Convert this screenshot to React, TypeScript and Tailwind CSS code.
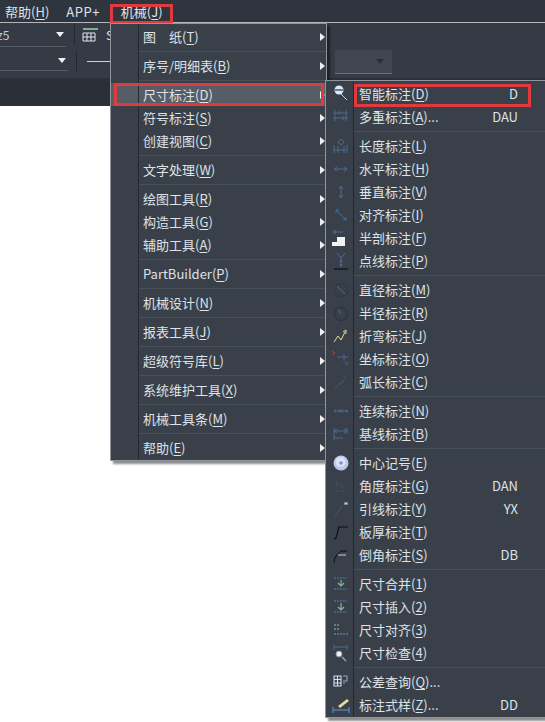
const font = { fontFamily: '"Noto Sans CJK SC", sans-serif' };

type Item = { zh: string; key?: string; tail?: string; short?: string; icon?: string; sep?: boolean };

const mainItems: Item[] = [
  { zh: "图　纸", key: "T", sep: true },
  { zh: "序号/明细表", key: "B", sep: true },
  { zh: "尺寸标注", key: "D" },
  { zh: "符号标注", key: "S" },
  { zh: "创建视图", key: "C", sep: true },
  { zh: "文字处理", key: "W", sep: true },
  { zh: "绘图工具", key: "R" },
  { zh: "构造工具", key: "G" },
  { zh: "辅助工具", key: "A", sep: true },
  { zh: "PartBuilder", key: "P", sep: true },
  { zh: "机械设计", key: "N", sep: true },
  { zh: "报表工具", key: "J", sep: true },
  { zh: "超级符号库", key: "L", sep: true },
  { zh: "系统维护工具", key: "X", sep: true },
  { zh: "机械工具条", key: "M", sep: true },
  { zh: "帮助", key: "E" },
];

const subItems: Item[] = [
  { zh: "智能标注", key: "D", short: "D", icon: "smart" },
  { zh: "多重标注", key: "A", tail: "...", short: "DAU", icon: "multi", sep: true },
  { zh: "长度标注", key: "L", icon: "length" },
  { zh: "水平标注", key: "H", icon: "horiz" },
  { zh: "垂直标注", key: "V", icon: "vert" },
  { zh: "对齐标注", key: "I", icon: "align" },
  { zh: "半剖标注", key: "F", icon: "half" },
  { zh: "点线标注", key: "P", icon: "dot", sep: true },
  { zh: "直径标注", key: "M", icon: "diameter" },
  { zh: "半径标注", key: "R", icon: "radius" },
  { zh: "折弯标注", key: "J", icon: "jog" },
  { zh: "坐标标注", key: "O", icon: "ordinate" },
  { zh: "弧长标注", key: "C", icon: "arc", sep: true },
  { zh: "连续标注", key: "N", icon: "cont" },
  { zh: "基线标注", key: "B", icon: "base", sep: true },
  { zh: "中心记号", key: "E", icon: "center" },
  { zh: "角度标注", key: "G", short: "DAN", icon: "angle" },
  { zh: "引线标注", key: "Y", short: "YX", icon: "leader" },
  { zh: "板厚标注", key: "T", icon: "plate" },
  { zh: "倒角标注", key: "S", short: "DB", icon: "chamfer", sep: true },
  { zh: "尺寸合并", key: "1", icon: "merge" },
  { zh: "尺寸插入", key: "2", icon: "insert" },
  { zh: "尺寸对齐", key: "3", icon: "dimalign" },
  { zh: "尺寸检查", key: "4", icon: "check", sep: true },
  { zh: "公差查询", key: "Q", tail: "...", icon: "tol" },
  { zh: "标注式样", key: "Z", tail: "...", short: "DD", icon: "style" },
];

function Glyph({ name }: { name?: string }) {
  const blue = "#4a6b94";
  const dim = "#46525f";
  let g = null;
  switch (name) {
    case "smart":
      g = (
        <>
          <circle cx="8" cy="6" r="4.5" fill="#dfe6ee" />
          <path d="M4 6h8" stroke="#2c5f8f" strokeWidth="1.5" />
          <path d="M10 10l6 6" stroke="#cfd6dd" strokeWidth="1" />
        </>
      );
      break;
    case "multi":
      g = <path d="M4 3v11M15 3v11M2 6h15M2 11h15M8 4v4M12 9v4" stroke={blue} strokeWidth="1" fill="none" />;
      break;
    case "length":
      g = <path d="M3 17V9M16 17V9M3 14h13M10 3l3 3-3 3-3-3zM7 10v7M13 10v7" stroke={blue} strokeWidth="1" fill="none" />;
      break;
    case "horiz":
      g = <path d="M3 10h13M3 10l3-2M3 10l3 2M16 10l-3-2M16 10l-3 2" stroke={blue} strokeWidth="1" fill="none" />;
      break;
    case "vert":
      g = <path d="M10 4v12M10 4l-2 3M10 4l2 3M10 16l-2-3M10 16l2-3" stroke={blue} strokeWidth="1" fill="none" />;
      break;
    case "align":
      g = <path d="M5 5l10 10M5 5h3M5 5v3M15 15h-3M15 15v-3" stroke={blue} strokeWidth="1" fill="none" />;
      break;
    case "half":
      g = (
        <>
          <path d="M2 4h10M2 4l3-2M2 4l3 2" stroke={blue} strokeWidth="1" fill="none" />
          <path d="M1 18v-4h5v-5h8v9z" fill="#f2f2f2" />
        </>
      );
      break;
    case "dot":
      g = (
        <>
          <path d="M6 2l4 5 4-5M10 7v9" stroke={blue} strokeWidth="1" fill="none" />
          <circle cx="10" cy="10" r="1.2" fill={blue} />
          <circle cx="10" cy="14" r="1.2" fill={blue} />
          <path d="M3 18h14" stroke="#10141a" strokeWidth="1.3" />
        </>
      );
      break;
    case "diameter":
      g = (
        <>
          <circle cx="10" cy="10" r="6.5" stroke="#2f3a47" strokeWidth="1.3" fill="none" />
          <path d="M6 6l8 8" stroke={blue} strokeWidth="1" />
        </>
      );
      break;
    case "radius":
      g = (
        <>
          <circle cx="10" cy="11" r="6.5" stroke="#2a3440" strokeWidth="1.3" fill="none" />
          <path d="M10 11l-3-5" stroke={blue} strokeWidth="1" />
        </>
      );
      break;
    case "jog":
      g = <path d="M3 16l4-6 3 4 4-8M12 6l3-2v4" stroke="#e8dc8a" strokeWidth="1" fill="none" />;
      break;
    case "ordinate":
      g = (
        <>
          <path d="M1 2l3 2-3 2" stroke="#a8444a" strokeWidth="1" fill="none" />
          <path d="M6 8h11M13 5v7" stroke={blue} strokeWidth="1" fill="none" />
          <path d="M14 13l3 3M17 13l-3 3" stroke="#8f4a4a" strokeWidth="1" />
        </>
      );
      break;
    case "arc":
      g = <path d="M4 17l4-5M8 12q4-1 5-4M13 7l3-4" stroke={dim} strokeWidth="1.2" fill="none" />;
      break;
    case "cont":
      g = <path d="M3 10h14M5 8.5L3 10l2 1.5M8 8.5l2 1.5-2 1.5M12 8.5L10 10l2 1.5M15 8.5l2 1.5-2 1.5" stroke={blue} strokeWidth="1" fill="none" />;
      break;
    case "base":
      g = <path d="M3 4v12M16 4v6M3 7h13M3 14h9M3 7l3-2M3 7l3 2M16 7l-3-2M16 7l-3 2" stroke={blue} strokeWidth="1" fill="none" />;
      break;
    case "center":
      g = (
        <>
          <circle cx="10" cy="10" r="7.5" fill="#b9c8ee" />
          <circle cx="9.5" cy="9" r="5" fill="#dbe3f7" />
          <path d="M8 10h4M10 8v4" stroke="#6a7cb0" strokeWidth="1" />
        </>
      );
      break;
    case "angle":
      g = <path d="M6 5v10h8M6 7q5 1 6 6" stroke={dim} strokeWidth="1.1" fill="none" strokeDasharray="2 1" />;
      break;
    case "leader":
      g = (
        <>
          <path d="M4 17l8-11" stroke={dim} strokeWidth="1.1" />
          <path d="M14 3v3M16 3v3M14 4.5h2" stroke="#d9dde2" strokeWidth="0.9" />
        </>
      );
      break;
    case "plate":
      g = <path d="M3 17l2-1 3-11h9" stroke="#0c0f13" strokeWidth="1.1" fill="none" />;
      break;
    case "chamfer":
      g = (
        <>
          <path d="M3 18q0-6 3-8l4-4h6" stroke="#0c0f13" strokeWidth="1" fill="none" />
          <path d="M7 10h8" stroke="#c9cdd2" strokeWidth="1" />
        </>
      );
      break;
    case "merge":
      g = (
        <>
          <path d="M3 4h13M3 15h13" stroke={blue} strokeWidth="1.5" strokeDasharray="2 1" />
          <path d="M10 6v6M7 9l3 3 3-3" stroke="#7fb89a" strokeWidth="1.2" fill="none" />
        </>
      );
      break;
    case "insert":
      g = (
        <>
          <path d="M3 4h13M3 15h13" stroke={blue} strokeWidth="1.5" strokeDasharray="2 1" fill="none" />
          <path d="M10 6v7M7 10l3 3 3-3" stroke="#7fb89a" strokeWidth="1.2" fill="none" />
        </>
      );
      break;
    case "dimalign":
      g = (
        <>
          <path d="M3 5h6M3 9h6" stroke="#6f9c80" strokeWidth="1.5" strokeDasharray="2 1" />
          <path d="M3 14h14" stroke={blue} strokeWidth="2" strokeDasharray="2 1" />
        </>
      );
      break;
    case "check":
      g = (
        <>
          <path d="M3 2v5M16 2v5M3 4h13" stroke={blue} strokeWidth="1" fill="none" />
          <circle cx="8" cy="11" r="3" fill="#f0f0f0" stroke="#8a949e" />
          <path d="M11 14l4 4" stroke="#9aa3ad" strokeWidth="1.4" />
        </>
      );
      break;
    case "tol":
      g = (
        <>
          <path d="M3 4h7v10H3zM3 7.5h7M3 11h7M6.5 4v10" stroke="#cfe0f2" strokeWidth="1.1" fill="none" />
          <path d="M12 4h4v5h-4M12 11h2" stroke="#8fa6bf" strokeWidth="1.1" fill="none" />
        </>
      );
      break;
    case "style":
      g = (
        <>
          <path d="M2 12v6M18 12v6M2 15h16" stroke="#5f93cf" strokeWidth="1" fill="none" />
          <path d="M7 11l9-7 2 2-9 7z" fill="#e6d9a8" />
        </>
      );
      break;
  }
  return (
    <svg width="20" height="20" viewBox="0 0 20 20">
      {g}
    </svg>
  );
}

function Label({ item }: { item: Item }) {
  return (
    <span className="whitespace-nowrap">
      {item.zh}(<span className="underline underline-offset-2">{item.key}</span>){item.tail}
    </span>
  );
}

function Sep() {
  return (
    <div className="flex h-[6px] items-center">
      <div className="h-full w-[28px] shrink-0 border-r border-[#23282f]" />
      <div className="h-px flex-1 bg-[#48505a]" />
    </div>
  );
}

function MainRow({ item }: { item: Item }) {
  const active = item.key === "D";
  return (
    <>
      <div className={`flex h-[23px] items-center ${active ? "bg-[#565d67]" : ""}`}>
        <div className="h-full w-[28px] shrink-0 border-r border-[#23282f]" />
        <div className="flex-1 pl-[4px]">
          <Label item={item} />
        </div>
        <svg width="5" height="8" viewBox="0 0 5 8" className="mr-[1px]">
          <path d="M0 0l5 4-5 4z" fill="#f0f0f0" />
        </svg>
      </div>
      {item.sep && <Sep />}
    </>
  );
}

function SubRow({ item }: { item: Item }) {
  return (
    <>
      <div className="flex h-[23px] items-center">
        <div className="flex h-full w-[28px] shrink-0 items-center justify-center border-r border-[#23282f] pl-[2px]">
          <Glyph name={item.icon} />
        </div>
        <div className="flex-1 pl-[5px]">
          <Label item={item} />
        </div>
        <span className="mr-[32px]">{item.short}</span>
      </div>
      {item.sep && <Sep />}
    </>
  );
}

function ComboArrow({ fill }: { fill: string }) {
  return (
    <svg width="10" height="6" viewBox="0 0 10 6">
      <path d="M1 0h8l-4 5z" fill={fill} />
    </svg>
  );
}

export default function App() {
  return (
    <div className="relative h-[722px] w-[545px] overflow-hidden bg-white text-[13px] leading-none text-[#dfe2e6]" style={font}>
      <div className="flex h-[22px] items-center bg-[#2f353e]">
        <span className="ml-[5px]">
          帮助(<span className="underline underline-offset-2">H</span>)
        </span>
        <span className="ml-[17px] tracking-[0.5px]">APP+</span>
        <span className="ml-[21px]">
          机械(<span className="underline underline-offset-2">J</span>)
        </span>
      </div>
      <div className="flex h-[56px] border-t border-[#b4b8bd] bg-[#353b45]">
        <div className="flex w-[335px] flex-col">
          <div className="flex h-[24px] items-center">
            <div className="flex h-full w-[66px] items-center justify-between border-b border-[#565d67] pr-[1px]">
              <span className="-ml-[3px] text-[12px] text-[#c8ccd2]">z5</span>
              <ComboArrow fill="#f0f0f0" />
            </div>
            <div className="ml-[8px] h-[20px] w-px bg-[#23282f]" />
            <svg width="18" height="14" viewBox="0 0 18 14" className="ml-[7px]">
              <path d="M1 1h15" stroke="#7fb08f" strokeWidth="2" />
              <path d="M1 5h12v8H1zM1 9h12M5 5v8M9 5v8" stroke="#dfe6ee" fill="none" />
            </svg>
            <span className="ml-[6px] text-[12px]">S</span>
          </div>
          <div className="flex h-[28px] items-center">
            <div className="flex h-[20px] w-[68px] items-center justify-end border-b border-[#565d67] pr-[1px]">
              <ComboArrow fill="#f0f0f0" />
            </div>
            <div className="ml-[8px] h-[20px] w-px bg-[#23282f]" />
            <div className="ml-[10px] h-px w-[30px] bg-[#d0d0d0]" />
          </div>
        </div>
        <div className="mt-[27px] flex h-[24px] w-[57px] items-center justify-end border-b border-[#6a717a] bg-[#404750] pr-[7px]">
          <ComboArrow fill="#2a2f36" />
        </div>
      </div>
      <div className="h-[28px] bg-[#2b3038]" />

      {/* red highlight on menu title */}
      <div className="absolute top-[4px] left-[110px] h-[20px] w-[63px] border-[3px] border-[#e0393e]" />

      {/* main menu */}
      <div className="absolute top-[23px] left-[110px] w-[217px] border border-[#8f959c] bg-[#39404a] py-[1px] shadow-[3px_3px_2px_rgba(0,0,0,0.45)]">
        {mainItems.map((item) => (
          <MainRow key={item.zh} item={item} />
        ))}
      </div>
      <div className="absolute top-[83px] left-[114px] h-[23px] w-[210px] border-[3px] border-[#e0393e]" />

      {/* sub menu */}
      <div className="absolute top-[80px] left-[325px] w-[226px] border border-[#8f959c] bg-[#39404a] py-[1px] shadow-[3px_3px_2px_rgba(0,0,0,0.45)]">
        {subItems.map((item) => (
          <SubRow key={item.zh} item={item} />
        ))}
      </div>
      <div className="absolute top-[84px] left-[354px] h-[23px] w-[177px] border-[3px] border-[#e0393e]" />
    </div>
  );
}
